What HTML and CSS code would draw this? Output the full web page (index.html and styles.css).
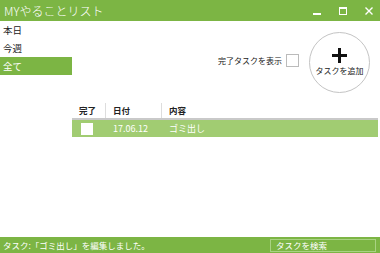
FILE: index.html
```html
<!DOCTYPE html>
<html lang="ja">
<head>
<meta charset="utf-8">
<link rel="stylesheet" href="styles.css">
</head>
<body>
<div class="window">
  <div class="titlebar">
    <span class="title">MYやることリスト</span>
    <div class="controls">
      <svg width="10" height="10" viewBox="0 0 10 10"><rect x="1" y="7" width="8" height="2" fill="#fff"/></svg>
      <svg width="10" height="10" viewBox="0 0 10 10"><rect x="1.5" y="1.5" width="7" height="7" fill="none" stroke="#fff"/><rect x="1" y="1" width="8" height="2" fill="#fff"/></svg>
      <svg width="10" height="10" viewBox="0 0 10 10"><path d="M1.5 1.5 L8.5 8.5 M8.5 1.5 L1.5 8.5" stroke="#fff" stroke-width="1.4"/></svg>
    </div>
  </div>
  <div class="main">
    <div class="top">
      <ul class="nav">
        <li>本日</li>
        <li>今週</li>
        <li class="active">全て</li>
      </ul>
      <div class="tools">
        <label class="show-done">完了タスクを表示<span class="box"></span></label>
        <button class="add">
          <svg class="plus" width="15" height="15" viewBox="0 0 15 15"><rect x="6" y="0" width="3" height="15" fill="#111"/><rect x="0" y="6" width="15" height="3" fill="#111"/></svg>
          <span class="add-label">タスクを追加</span>
        </button>
      </div>
    </div>
    <div class="table">
      <div class="thead">
        <div class="c1">完了</div>
        <div class="c2">日付</div>
        <div class="c3">内容</div>
      </div>
      <div class="row selected">
        <div class="c1"><span class="cb"></span></div>
        <div class="c2">17.06.12</div>
        <div class="c3">ゴミ出し</div>
      </div>
    </div>
  </div>
  <div class="status">
    <span class="msg">タスク:「ゴミ出し」を編集しました。</span>
    <div class="search">タスクを検索</div>
  </div>
</div>
</body>
</html>
```
FILE: styles.css
```css
* { box-sizing: border-box; }
html, body { margin: 0; padding: 0; }
body {
  font-family: "Noto Sans CJK JP", "Noto Sans", sans-serif;
  font-size: 9px;
  color: #222;
  background: #fff;
}
.window {
  width: 380px;
  height: 253px;
  display: flex;
  flex-direction: column;
  overflow: hidden;
}
.titlebar {
  height: 21px;
  background: #7cb544;
  display: flex;
  align-items: center;
  justify-content: space-between;
  padding: 0 6px 0 4px;
  color: #fff;
}
.title { font-size: 12px; line-height: 21px; font-weight: 300; }
.controls { display: flex; gap: 16px; align-items: center; }
.controls svg { display: block; }
.main { flex: 1; display: flex; flex-direction: column; }
.top { display: flex; justify-content: space-between; height: 82px; }
.nav { list-style: none; margin: 0; padding: 0; width: 72px; }
.nav li {
  height: 18px;
  line-height: 18px;
  padding-left: 3px;
  font-size: 9.5px;
}
.nav li.active { background: #7cb544; color: #fff; }
.tools { display: flex; align-items: flex-start; padding-right: 10px; padding-top: 11px; }
.show-done {
  display: flex;
  align-items: center;
  gap: 4px;
  margin-top: 22px;
  margin-right: 10px;
  font-size: 8px;
}
.box {
  display: inline-block;
  width: 13px;
  height: 13px;
  border: 1px solid #bbb;
  background: #fff;
}
.add {
  width: 61px;
  height: 61px;
  border-radius: 50%;
  border: 1.5px solid #c4c4c4;
  background: #fff;
  display: flex;
  flex-direction: column;
  align-items: center;
  justify-content: center;
  padding: 0 0 2px;
  font-family: inherit;
  color: #222;
}
.plus { display: block; }
.add-label { font-size: 8px; line-height: 11px; margin-top: 2px; }
.table { margin-left: 72px; margin-right: 2px; }
.thead {
  display: flex;
  height: 17px;
  border-bottom: 2px solid #c9c9c9;
  font-size: 8.5px;
  font-weight: 700;
}
.thead > div { line-height: 15px; padding-left: 7px; }
.thead .c1, .thead .c2 { border-right: 1px solid #ddd; }
.c1 { width: 34px; }
.c2 { width: 56px; }
.c3 { flex: 1; }
.row { display: flex; height: 17px; align-items: center; }
.row.selected { background: #a1cc72; color: #fff; }
.row > div { padding-left: 7px; font-size: 9px; }
.row .c1 { padding-left: 9px; display: flex; align-items: center; }
.cb { display: inline-block; width: 12px; height: 12px; background: #fff; }
.status {
  height: 16px;
  background: #7cb544;
  color: #fff;
  display: flex;
  align-items: center;
  justify-content: space-between;
  padding: 0 4px 0 3px;
  font-size: 8.5px;
}
.search {
  width: 106px;
  height: 13px;
  border: 1px solid #a9d283;
  line-height: 11px;
  padding-left: 5px;
  font-size: 8.5px;
}
```
